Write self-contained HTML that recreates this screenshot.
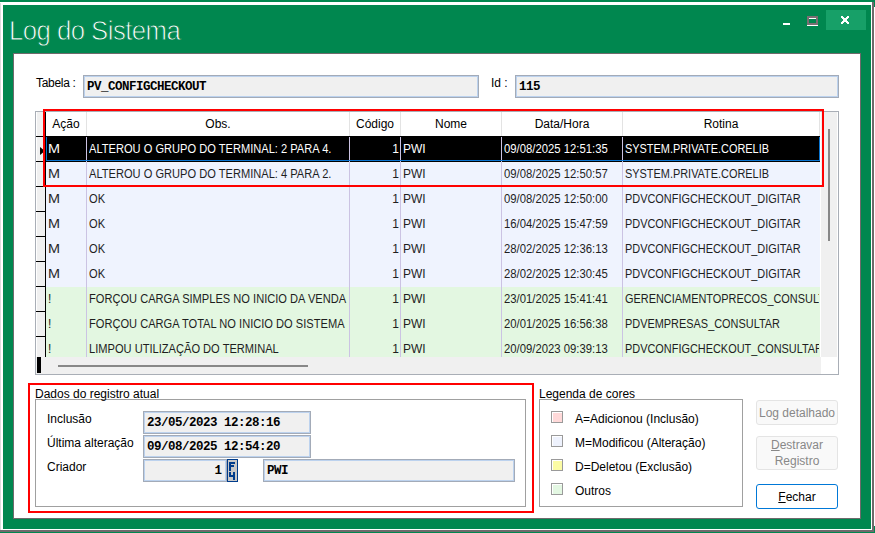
<!DOCTYPE html>
<html><head><meta charset="utf-8"><style>
html,body{margin:0;padding:0;width:875px;height:533px;overflow:hidden;position:relative}
</style></head><body>
<div style="position:absolute;left:0px;top:0px;width:875px;height:533px;background:#00874f"></div>
<div style="position:absolute;left:874px;top:7px;width:1px;height:519px;background:#ffffff"></div>
<div style="position:absolute;left:0px;top:2px;width:874px;height:530px;background:#6e6a6c"></div>
<div style="position:absolute;left:0px;top:2px;width:872px;height:528px;background:#ffffff"></div>
<div style="position:absolute;left:0px;top:3px;width:1px;height:527px;background:#dcdcdc"></div>
<div style="position:absolute;left:3px;top:5px;width:868px;height:524px;background:#00874f"></div>
<div style="position:absolute;left:8.5px;top:16px;font-family:'Liberation Sans', sans-serif;font-size:28px;color:#fff;-webkit-text-stroke:0.9px #00874f;white-space:pre;line-height:30px;letter-spacing:-0.6px;transform:scaleX(0.92);transform-origin:left">Log do Sistema</div>
<div style="position:absolute;left:783px;top:23px;width:7px;height:2px;background:#fff"></div>
<div style="position:absolute;left:807px;top:16px;width:11px;height:9px;border:2px solid #7a6e72;box-sizing:border-box"></div>
<div style="position:absolute;left:809px;top:18px;width:7px;height:1px;background:#fff"></div>
<div style="position:absolute;left:807px;top:25px;width:11px;height:1px;background:#fff"></div>
<div style="position:absolute;left:826px;top:10px;width:40px;height:20px;background:#17a068"></div>
<svg style="position:absolute;left:841px;top:16px" width="8" height="8" viewBox="0 0 8 8" fill="#fff" shape-rendering="crispEdges"><rect x="0" y="0" width="1" height="1"/><rect x="1" y="0" width="1" height="1"/><rect x="6" y="0" width="1" height="1"/><rect x="7" y="0" width="1" height="1"/><rect x="0" y="1" width="1" height="1"/><rect x="1" y="1" width="1" height="1"/><rect x="2" y="1" width="1" height="1"/><rect x="5" y="1" width="1" height="1"/><rect x="6" y="1" width="1" height="1"/><rect x="7" y="1" width="1" height="1"/><rect x="1" y="2" width="1" height="1"/><rect x="2" y="2" width="1" height="1"/><rect x="3" y="2" width="1" height="1"/><rect x="4" y="2" width="1" height="1"/><rect x="5" y="2" width="1" height="1"/><rect x="6" y="2" width="1" height="1"/><rect x="2" y="3" width="1" height="1"/><rect x="3" y="3" width="1" height="1"/><rect x="4" y="3" width="1" height="1"/><rect x="5" y="3" width="1" height="1"/><rect x="2" y="4" width="1" height="1"/><rect x="3" y="4" width="1" height="1"/><rect x="4" y="4" width="1" height="1"/><rect x="5" y="4" width="1" height="1"/><rect x="1" y="5" width="1" height="1"/><rect x="2" y="5" width="1" height="1"/><rect x="3" y="5" width="1" height="1"/><rect x="4" y="5" width="1" height="1"/><rect x="5" y="5" width="1" height="1"/><rect x="6" y="5" width="1" height="1"/><rect x="0" y="6" width="1" height="1"/><rect x="1" y="6" width="1" height="1"/><rect x="2" y="6" width="1" height="1"/><rect x="5" y="6" width="1" height="1"/><rect x="6" y="6" width="1" height="1"/><rect x="7" y="6" width="1" height="1"/><rect x="0" y="7" width="1" height="1"/><rect x="1" y="7" width="1" height="1"/><rect x="6" y="7" width="1" height="1"/><rect x="7" y="7" width="1" height="1"/></svg>
<div style="position:absolute;left:13px;top:53px;width:848px;height:466px;background:#fff;border:1px solid #6e6a6c;box-sizing:border-box"></div>
<div style="position:absolute;left:36px;top:76.84px;font-family:'Liberation Sans', sans-serif;font-size:12px;font-weight:400;color:#000;white-space:pre;line-height:12px;letter-spacing:-0.3px">Tabela :</div>
<div style="position:absolute;left:83px;top:75px;width:396px;height:23px;background:#f0f0f0;border:1px solid #a3abb8;box-shadow:inset 0 0 0 1px #bcd2ee;box-sizing:border-box"></div>
<div style="position:absolute;left:87px;top:80.92px;font-family:'Liberation Mono', monospace;font-size:12.5px;font-weight:700;color:#000;white-space:pre;line-height:12.5px;letter-spacing:-0.5px">PV_CONFIGCHECKOUT</div>
<div style="position:absolute;left:491px;top:76.84px;font-family:'Liberation Sans', sans-serif;font-size:12px;font-weight:400;color:#000;white-space:pre;line-height:12px;">Id :</div>
<div style="position:absolute;left:515px;top:75px;width:324px;height:23px;background:#f0f0f0;border:1px solid #a3abb8;box-shadow:inset 0 0 0 1px #bcd2ee;box-sizing:border-box"></div>
<div style="position:absolute;left:519px;top:80.92px;font-family:'Liberation Mono', monospace;font-size:12.5px;font-weight:700;color:#000;white-space:pre;line-height:12.5px;letter-spacing:-0.5px">115</div>
<div style="position:absolute;left:35px;top:111px;width:804px;height:264px;background:#fff;border:1px solid #a9aeb6;box-sizing:border-box"></div>
<div style="position:absolute;left:36px;top:112px;width:10px;height:245px;background:#000"></div>
<div style="position:absolute;left:36px;top:112px;width:9px;height:24px;background:#f0f0f0;border-left:1px solid #fff;box-sizing:border-box"></div>
<div style="position:absolute;left:36px;top:137px;width:9px;height:24px;background:#f0f0f0;border-left:1px solid #fff;box-sizing:border-box"></div>
<div style="position:absolute;left:36px;top:162px;width:9px;height:24px;background:#f0f0f0;border-left:1px solid #fff;box-sizing:border-box"></div>
<div style="position:absolute;left:36px;top:187px;width:9px;height:24px;background:#f0f0f0;border-left:1px solid #fff;box-sizing:border-box"></div>
<div style="position:absolute;left:36px;top:212px;width:9px;height:24px;background:#f0f0f0;border-left:1px solid #fff;box-sizing:border-box"></div>
<div style="position:absolute;left:36px;top:237px;width:9px;height:24px;background:#f0f0f0;border-left:1px solid #fff;box-sizing:border-box"></div>
<div style="position:absolute;left:36px;top:262px;width:9px;height:24px;background:#f0f0f0;border-left:1px solid #fff;box-sizing:border-box"></div>
<div style="position:absolute;left:36px;top:287px;width:9px;height:24px;background:#f0f0f0;border-left:1px solid #fff;box-sizing:border-box"></div>
<div style="position:absolute;left:36px;top:312px;width:9px;height:24px;background:#f0f0f0;border-left:1px solid #fff;box-sizing:border-box"></div>
<div style="position:absolute;left:36px;top:337px;width:9px;height:20px;background:#f0f0f0;border-left:1px solid #fff;box-sizing:border-box"></div>
<svg style="position:absolute;left:40px;top:147px" width="4" height="8" viewBox="0 0 4 8"><path d="M0 0 L4 3.2 L4 4.8 L0 8Z" fill="#000"/></svg>
<div style="position:absolute;left:46px;top:112px;width:40px;height:24px;font-family:'Liberation Sans', sans-serif;font-size:12px;line-height:24px;text-align:center;color:#000">Ação</div>
<div style="position:absolute;left:86px;top:112px;width:1px;height:24px;background:#e3e3e3"></div>
<div style="position:absolute;left:87px;top:112px;width:262px;height:24px;font-family:'Liberation Sans', sans-serif;font-size:12px;line-height:24px;text-align:center;color:#000">Obs.</div>
<div style="position:absolute;left:349px;top:112px;width:1px;height:24px;background:#e3e3e3"></div>
<div style="position:absolute;left:350px;top:112px;width:50px;height:24px;font-family:'Liberation Sans', sans-serif;font-size:12px;line-height:24px;text-align:center;color:#000">Código</div>
<div style="position:absolute;left:400px;top:112px;width:1px;height:24px;background:#e3e3e3"></div>
<div style="position:absolute;left:401px;top:112px;width:100px;height:24px;font-family:'Liberation Sans', sans-serif;font-size:12px;line-height:24px;text-align:center;color:#000">Nome</div>
<div style="position:absolute;left:501px;top:112px;width:1px;height:24px;background:#e3e3e3"></div>
<div style="position:absolute;left:502px;top:112px;width:120px;height:24px;font-family:'Liberation Sans', sans-serif;font-size:12px;line-height:24px;text-align:center;color:#000">Data/Hora</div>
<div style="position:absolute;left:622px;top:112px;width:1px;height:24px;background:#e3e3e3"></div>
<div style="position:absolute;left:623px;top:112px;width:196px;height:24px;font-family:'Liberation Sans', sans-serif;font-size:12px;line-height:24px;text-align:center;color:#000">Rotina</div>
<div style="position:absolute;left:819px;top:112px;width:1px;height:24px;background:#e3e3e3"></div>
<div style="position:absolute;left:46px;top:136px;width:774px;height:1px;background:#000"></div>
<div style="position:absolute;left:46px;top:137px;width:774px;height:220px;overflow:hidden">
<div style="position:absolute;left:0;top:0px;width:775px;height:25px;background:#000"></div>
<div style="position:absolute;left:0px;top:0px;width:40px;height:25px;overflow:hidden;font-family:'Liberation Sans', sans-serif;font-size:12px;line-height:25px;text-align:left;padding-left:2px;box-sizing:border-box;color:#fff;white-space:pre"><span style="display:inline-block;transform:scaleX(1.2);transform-origin:0 50%">M</span></div>
<div style="position:absolute;left:40px;top:0px;width:1px;height:25px;background:#cbc3e3"></div>
<div style="position:absolute;left:41px;top:0px;width:262px;height:25px;overflow:hidden;font-family:'Liberation Sans', sans-serif;font-size:12px;line-height:25px;text-align:left;padding-left:2px;box-sizing:border-box;color:#fff;white-space:pre"><span style="display:inline-block;transform:scaleX(0.925);transform-origin:0 50%">ALTEROU O GRUPO DO TERMINAL: 2 PARA 4.</span></div>
<div style="position:absolute;left:303px;top:0px;width:1px;height:25px;background:#cbc3e3"></div>
<div style="position:absolute;left:304px;top:0px;width:50px;height:25px;overflow:hidden;font-family:'Liberation Sans', sans-serif;font-size:12px;line-height:25px;text-align:right;padding-right:1px;box-sizing:border-box;color:#fff;white-space:pre">1</div>
<div style="position:absolute;left:354px;top:0px;width:1px;height:25px;background:#cbc3e3"></div>
<div style="position:absolute;left:355px;top:0px;width:100px;height:25px;overflow:hidden;font-family:'Liberation Sans', sans-serif;font-size:12px;line-height:25px;text-align:left;padding-left:2px;box-sizing:border-box;color:#fff;white-space:pre">PWI</div>
<div style="position:absolute;left:455px;top:0px;width:1px;height:25px;background:#cbc3e3"></div>
<div style="position:absolute;left:456px;top:0px;width:120px;height:25px;overflow:hidden;font-family:'Liberation Sans', sans-serif;font-size:12px;line-height:25px;text-align:left;padding-left:2px;box-sizing:border-box;color:#fff;white-space:pre"><span style="display:inline-block;transform:scaleX(0.943);transform-origin:0 50%">09/08/2025 12:51:35</span></div>
<div style="position:absolute;left:576px;top:0px;width:1px;height:25px;background:#cbc3e3"></div>
<div style="position:absolute;left:577px;top:0px;width:196px;height:25px;overflow:hidden;font-family:'Liberation Sans', sans-serif;font-size:12px;line-height:25px;text-align:left;padding-left:2px;box-sizing:border-box;color:#fff;white-space:pre"><span style="display:inline-block;transform:scaleX(0.91);transform-origin:0 50%">SYSTEM.PRIVATE.CORELIB</span></div>
<div style="position:absolute;left:0;top:25px;width:775px;height:25px;background:#eff3fe"></div>
<div style="position:absolute;left:0px;top:25px;width:40px;height:25px;overflow:hidden;font-family:'Liberation Sans', sans-serif;font-size:12px;line-height:25px;text-align:left;padding-left:2px;box-sizing:border-box;color:#1e1e1e;white-space:pre"><span style="display:inline-block;transform:scaleX(1.2);transform-origin:0 50%">M</span></div>
<div style="position:absolute;left:40px;top:25px;width:1px;height:25px;background:#cbc3e3"></div>
<div style="position:absolute;left:41px;top:25px;width:262px;height:25px;overflow:hidden;font-family:'Liberation Sans', sans-serif;font-size:12px;line-height:25px;text-align:left;padding-left:2px;box-sizing:border-box;color:#1e1e1e;white-space:pre"><span style="display:inline-block;transform:scaleX(0.925);transform-origin:0 50%">ALTEROU O GRUPO DO TERMINAL: 4 PARA 2.</span></div>
<div style="position:absolute;left:303px;top:25px;width:1px;height:25px;background:#cbc3e3"></div>
<div style="position:absolute;left:304px;top:25px;width:50px;height:25px;overflow:hidden;font-family:'Liberation Sans', sans-serif;font-size:12px;line-height:25px;text-align:right;padding-right:1px;box-sizing:border-box;color:#1e1e1e;white-space:pre">1</div>
<div style="position:absolute;left:354px;top:25px;width:1px;height:25px;background:#cbc3e3"></div>
<div style="position:absolute;left:355px;top:25px;width:100px;height:25px;overflow:hidden;font-family:'Liberation Sans', sans-serif;font-size:12px;line-height:25px;text-align:left;padding-left:2px;box-sizing:border-box;color:#1e1e1e;white-space:pre">PWI</div>
<div style="position:absolute;left:455px;top:25px;width:1px;height:25px;background:#cbc3e3"></div>
<div style="position:absolute;left:456px;top:25px;width:120px;height:25px;overflow:hidden;font-family:'Liberation Sans', sans-serif;font-size:12px;line-height:25px;text-align:left;padding-left:2px;box-sizing:border-box;color:#1e1e1e;white-space:pre"><span style="display:inline-block;transform:scaleX(0.943);transform-origin:0 50%">09/08/2025 12:50:57</span></div>
<div style="position:absolute;left:576px;top:25px;width:1px;height:25px;background:#cbc3e3"></div>
<div style="position:absolute;left:577px;top:25px;width:196px;height:25px;overflow:hidden;font-family:'Liberation Sans', sans-serif;font-size:12px;line-height:25px;text-align:left;padding-left:2px;box-sizing:border-box;color:#1e1e1e;white-space:pre"><span style="display:inline-block;transform:scaleX(0.91);transform-origin:0 50%">SYSTEM.PRIVATE.CORELIB</span></div>
<div style="position:absolute;left:0;top:50px;width:775px;height:25px;background:#eff3fe"></div>
<div style="position:absolute;left:0px;top:50px;width:40px;height:25px;overflow:hidden;font-family:'Liberation Sans', sans-serif;font-size:12px;line-height:25px;text-align:left;padding-left:2px;box-sizing:border-box;color:#1e1e1e;white-space:pre"><span style="display:inline-block;transform:scaleX(1.2);transform-origin:0 50%">M</span></div>
<div style="position:absolute;left:40px;top:50px;width:1px;height:25px;background:#cbc3e3"></div>
<div style="position:absolute;left:41px;top:50px;width:262px;height:25px;overflow:hidden;font-family:'Liberation Sans', sans-serif;font-size:12px;line-height:25px;text-align:left;padding-left:2px;box-sizing:border-box;color:#1e1e1e;white-space:pre"><span style="display:inline-block;transform:scaleX(0.925);transform-origin:0 50%">OK</span></div>
<div style="position:absolute;left:303px;top:50px;width:1px;height:25px;background:#cbc3e3"></div>
<div style="position:absolute;left:304px;top:50px;width:50px;height:25px;overflow:hidden;font-family:'Liberation Sans', sans-serif;font-size:12px;line-height:25px;text-align:right;padding-right:1px;box-sizing:border-box;color:#1e1e1e;white-space:pre">1</div>
<div style="position:absolute;left:354px;top:50px;width:1px;height:25px;background:#cbc3e3"></div>
<div style="position:absolute;left:355px;top:50px;width:100px;height:25px;overflow:hidden;font-family:'Liberation Sans', sans-serif;font-size:12px;line-height:25px;text-align:left;padding-left:2px;box-sizing:border-box;color:#1e1e1e;white-space:pre">PWI</div>
<div style="position:absolute;left:455px;top:50px;width:1px;height:25px;background:#cbc3e3"></div>
<div style="position:absolute;left:456px;top:50px;width:120px;height:25px;overflow:hidden;font-family:'Liberation Sans', sans-serif;font-size:12px;line-height:25px;text-align:left;padding-left:2px;box-sizing:border-box;color:#1e1e1e;white-space:pre"><span style="display:inline-block;transform:scaleX(0.943);transform-origin:0 50%">09/08/2025 12:50:00</span></div>
<div style="position:absolute;left:576px;top:50px;width:1px;height:25px;background:#cbc3e3"></div>
<div style="position:absolute;left:577px;top:50px;width:196px;height:25px;overflow:hidden;font-family:'Liberation Sans', sans-serif;font-size:12px;line-height:25px;text-align:left;padding-left:2px;box-sizing:border-box;color:#1e1e1e;white-space:pre"><span style="display:inline-block;transform:scaleX(0.91);transform-origin:0 50%">PDVCONFIGCHECKOUT_DIGITAR</span></div>
<div style="position:absolute;left:0;top:75px;width:775px;height:25px;background:#eff3fe"></div>
<div style="position:absolute;left:0px;top:75px;width:40px;height:25px;overflow:hidden;font-family:'Liberation Sans', sans-serif;font-size:12px;line-height:25px;text-align:left;padding-left:2px;box-sizing:border-box;color:#1e1e1e;white-space:pre"><span style="display:inline-block;transform:scaleX(1.2);transform-origin:0 50%">M</span></div>
<div style="position:absolute;left:40px;top:75px;width:1px;height:25px;background:#cbc3e3"></div>
<div style="position:absolute;left:41px;top:75px;width:262px;height:25px;overflow:hidden;font-family:'Liberation Sans', sans-serif;font-size:12px;line-height:25px;text-align:left;padding-left:2px;box-sizing:border-box;color:#1e1e1e;white-space:pre"><span style="display:inline-block;transform:scaleX(0.925);transform-origin:0 50%">OK</span></div>
<div style="position:absolute;left:303px;top:75px;width:1px;height:25px;background:#cbc3e3"></div>
<div style="position:absolute;left:304px;top:75px;width:50px;height:25px;overflow:hidden;font-family:'Liberation Sans', sans-serif;font-size:12px;line-height:25px;text-align:right;padding-right:1px;box-sizing:border-box;color:#1e1e1e;white-space:pre">1</div>
<div style="position:absolute;left:354px;top:75px;width:1px;height:25px;background:#cbc3e3"></div>
<div style="position:absolute;left:355px;top:75px;width:100px;height:25px;overflow:hidden;font-family:'Liberation Sans', sans-serif;font-size:12px;line-height:25px;text-align:left;padding-left:2px;box-sizing:border-box;color:#1e1e1e;white-space:pre">PWI</div>
<div style="position:absolute;left:455px;top:75px;width:1px;height:25px;background:#cbc3e3"></div>
<div style="position:absolute;left:456px;top:75px;width:120px;height:25px;overflow:hidden;font-family:'Liberation Sans', sans-serif;font-size:12px;line-height:25px;text-align:left;padding-left:2px;box-sizing:border-box;color:#1e1e1e;white-space:pre"><span style="display:inline-block;transform:scaleX(0.943);transform-origin:0 50%">16/04/2025 15:47:59</span></div>
<div style="position:absolute;left:576px;top:75px;width:1px;height:25px;background:#cbc3e3"></div>
<div style="position:absolute;left:577px;top:75px;width:196px;height:25px;overflow:hidden;font-family:'Liberation Sans', sans-serif;font-size:12px;line-height:25px;text-align:left;padding-left:2px;box-sizing:border-box;color:#1e1e1e;white-space:pre"><span style="display:inline-block;transform:scaleX(0.91);transform-origin:0 50%">PDVCONFIGCHECKOUT_DIGITAR</span></div>
<div style="position:absolute;left:0;top:100px;width:775px;height:25px;background:#eff3fe"></div>
<div style="position:absolute;left:0px;top:100px;width:40px;height:25px;overflow:hidden;font-family:'Liberation Sans', sans-serif;font-size:12px;line-height:25px;text-align:left;padding-left:2px;box-sizing:border-box;color:#1e1e1e;white-space:pre"><span style="display:inline-block;transform:scaleX(1.2);transform-origin:0 50%">M</span></div>
<div style="position:absolute;left:40px;top:100px;width:1px;height:25px;background:#cbc3e3"></div>
<div style="position:absolute;left:41px;top:100px;width:262px;height:25px;overflow:hidden;font-family:'Liberation Sans', sans-serif;font-size:12px;line-height:25px;text-align:left;padding-left:2px;box-sizing:border-box;color:#1e1e1e;white-space:pre"><span style="display:inline-block;transform:scaleX(0.925);transform-origin:0 50%">OK</span></div>
<div style="position:absolute;left:303px;top:100px;width:1px;height:25px;background:#cbc3e3"></div>
<div style="position:absolute;left:304px;top:100px;width:50px;height:25px;overflow:hidden;font-family:'Liberation Sans', sans-serif;font-size:12px;line-height:25px;text-align:right;padding-right:1px;box-sizing:border-box;color:#1e1e1e;white-space:pre">1</div>
<div style="position:absolute;left:354px;top:100px;width:1px;height:25px;background:#cbc3e3"></div>
<div style="position:absolute;left:355px;top:100px;width:100px;height:25px;overflow:hidden;font-family:'Liberation Sans', sans-serif;font-size:12px;line-height:25px;text-align:left;padding-left:2px;box-sizing:border-box;color:#1e1e1e;white-space:pre">PWI</div>
<div style="position:absolute;left:455px;top:100px;width:1px;height:25px;background:#cbc3e3"></div>
<div style="position:absolute;left:456px;top:100px;width:120px;height:25px;overflow:hidden;font-family:'Liberation Sans', sans-serif;font-size:12px;line-height:25px;text-align:left;padding-left:2px;box-sizing:border-box;color:#1e1e1e;white-space:pre"><span style="display:inline-block;transform:scaleX(0.943);transform-origin:0 50%">28/02/2025 12:36:13</span></div>
<div style="position:absolute;left:576px;top:100px;width:1px;height:25px;background:#cbc3e3"></div>
<div style="position:absolute;left:577px;top:100px;width:196px;height:25px;overflow:hidden;font-family:'Liberation Sans', sans-serif;font-size:12px;line-height:25px;text-align:left;padding-left:2px;box-sizing:border-box;color:#1e1e1e;white-space:pre"><span style="display:inline-block;transform:scaleX(0.91);transform-origin:0 50%">PDVCONFIGCHECKOUT_DIGITAR</span></div>
<div style="position:absolute;left:0;top:125px;width:775px;height:25px;background:#eff3fe"></div>
<div style="position:absolute;left:0px;top:125px;width:40px;height:25px;overflow:hidden;font-family:'Liberation Sans', sans-serif;font-size:12px;line-height:25px;text-align:left;padding-left:2px;box-sizing:border-box;color:#1e1e1e;white-space:pre"><span style="display:inline-block;transform:scaleX(1.2);transform-origin:0 50%">M</span></div>
<div style="position:absolute;left:40px;top:125px;width:1px;height:25px;background:#cbc3e3"></div>
<div style="position:absolute;left:41px;top:125px;width:262px;height:25px;overflow:hidden;font-family:'Liberation Sans', sans-serif;font-size:12px;line-height:25px;text-align:left;padding-left:2px;box-sizing:border-box;color:#1e1e1e;white-space:pre"><span style="display:inline-block;transform:scaleX(0.925);transform-origin:0 50%">OK</span></div>
<div style="position:absolute;left:303px;top:125px;width:1px;height:25px;background:#cbc3e3"></div>
<div style="position:absolute;left:304px;top:125px;width:50px;height:25px;overflow:hidden;font-family:'Liberation Sans', sans-serif;font-size:12px;line-height:25px;text-align:right;padding-right:1px;box-sizing:border-box;color:#1e1e1e;white-space:pre">1</div>
<div style="position:absolute;left:354px;top:125px;width:1px;height:25px;background:#cbc3e3"></div>
<div style="position:absolute;left:355px;top:125px;width:100px;height:25px;overflow:hidden;font-family:'Liberation Sans', sans-serif;font-size:12px;line-height:25px;text-align:left;padding-left:2px;box-sizing:border-box;color:#1e1e1e;white-space:pre">PWI</div>
<div style="position:absolute;left:455px;top:125px;width:1px;height:25px;background:#cbc3e3"></div>
<div style="position:absolute;left:456px;top:125px;width:120px;height:25px;overflow:hidden;font-family:'Liberation Sans', sans-serif;font-size:12px;line-height:25px;text-align:left;padding-left:2px;box-sizing:border-box;color:#1e1e1e;white-space:pre"><span style="display:inline-block;transform:scaleX(0.943);transform-origin:0 50%">28/02/2025 12:30:45</span></div>
<div style="position:absolute;left:576px;top:125px;width:1px;height:25px;background:#cbc3e3"></div>
<div style="position:absolute;left:577px;top:125px;width:196px;height:25px;overflow:hidden;font-family:'Liberation Sans', sans-serif;font-size:12px;line-height:25px;text-align:left;padding-left:2px;box-sizing:border-box;color:#1e1e1e;white-space:pre"><span style="display:inline-block;transform:scaleX(0.91);transform-origin:0 50%">PDVCONFIGCHECKOUT_DIGITAR</span></div>
<div style="position:absolute;left:0;top:150px;width:775px;height:25px;background:#e3f7e1"></div>
<div style="position:absolute;left:0px;top:150px;width:40px;height:25px;overflow:hidden;font-family:'Liberation Sans', sans-serif;font-size:12px;line-height:25px;text-align:left;padding-left:2px;box-sizing:border-box;color:#1e1e1e;white-space:pre">!</div>
<div style="position:absolute;left:40px;top:150px;width:1px;height:25px;background:#cbc3e3"></div>
<div style="position:absolute;left:41px;top:150px;width:262px;height:25px;overflow:hidden;font-family:'Liberation Sans', sans-serif;font-size:12px;line-height:25px;text-align:left;padding-left:2px;box-sizing:border-box;color:#1e1e1e;white-space:pre"><span style="display:inline-block;transform:scaleX(0.925);transform-origin:0 50%">FORÇOU CARGA SIMPLES NO INICIO DA VENDA</span></div>
<div style="position:absolute;left:303px;top:150px;width:1px;height:25px;background:#cbc3e3"></div>
<div style="position:absolute;left:304px;top:150px;width:50px;height:25px;overflow:hidden;font-family:'Liberation Sans', sans-serif;font-size:12px;line-height:25px;text-align:right;padding-right:1px;box-sizing:border-box;color:#1e1e1e;white-space:pre">1</div>
<div style="position:absolute;left:354px;top:150px;width:1px;height:25px;background:#cbc3e3"></div>
<div style="position:absolute;left:355px;top:150px;width:100px;height:25px;overflow:hidden;font-family:'Liberation Sans', sans-serif;font-size:12px;line-height:25px;text-align:left;padding-left:2px;box-sizing:border-box;color:#1e1e1e;white-space:pre">PWI</div>
<div style="position:absolute;left:455px;top:150px;width:1px;height:25px;background:#cbc3e3"></div>
<div style="position:absolute;left:456px;top:150px;width:120px;height:25px;overflow:hidden;font-family:'Liberation Sans', sans-serif;font-size:12px;line-height:25px;text-align:left;padding-left:2px;box-sizing:border-box;color:#1e1e1e;white-space:pre"><span style="display:inline-block;transform:scaleX(0.943);transform-origin:0 50%">23/01/2025 15:41:41</span></div>
<div style="position:absolute;left:576px;top:150px;width:1px;height:25px;background:#cbc3e3"></div>
<div style="position:absolute;left:577px;top:150px;width:196px;height:25px;overflow:hidden;font-family:'Liberation Sans', sans-serif;font-size:12px;line-height:25px;text-align:left;padding-left:2px;box-sizing:border-box;color:#1e1e1e;white-space:pre"><span style="display:inline-block;transform:scaleX(0.91);transform-origin:0 50%">GERENCIAMENTOPRECOS_CONSULTAR</span></div>
<div style="position:absolute;left:0;top:175px;width:775px;height:25px;background:#e3f7e1"></div>
<div style="position:absolute;left:0px;top:175px;width:40px;height:25px;overflow:hidden;font-family:'Liberation Sans', sans-serif;font-size:12px;line-height:25px;text-align:left;padding-left:2px;box-sizing:border-box;color:#1e1e1e;white-space:pre">!</div>
<div style="position:absolute;left:40px;top:175px;width:1px;height:25px;background:#cbc3e3"></div>
<div style="position:absolute;left:41px;top:175px;width:262px;height:25px;overflow:hidden;font-family:'Liberation Sans', sans-serif;font-size:12px;line-height:25px;text-align:left;padding-left:2px;box-sizing:border-box;color:#1e1e1e;white-space:pre"><span style="display:inline-block;transform:scaleX(0.925);transform-origin:0 50%">FORÇOU CARGA TOTAL NO INICIO DO SISTEMA</span></div>
<div style="position:absolute;left:303px;top:175px;width:1px;height:25px;background:#cbc3e3"></div>
<div style="position:absolute;left:304px;top:175px;width:50px;height:25px;overflow:hidden;font-family:'Liberation Sans', sans-serif;font-size:12px;line-height:25px;text-align:right;padding-right:1px;box-sizing:border-box;color:#1e1e1e;white-space:pre">1</div>
<div style="position:absolute;left:354px;top:175px;width:1px;height:25px;background:#cbc3e3"></div>
<div style="position:absolute;left:355px;top:175px;width:100px;height:25px;overflow:hidden;font-family:'Liberation Sans', sans-serif;font-size:12px;line-height:25px;text-align:left;padding-left:2px;box-sizing:border-box;color:#1e1e1e;white-space:pre">PWI</div>
<div style="position:absolute;left:455px;top:175px;width:1px;height:25px;background:#cbc3e3"></div>
<div style="position:absolute;left:456px;top:175px;width:120px;height:25px;overflow:hidden;font-family:'Liberation Sans', sans-serif;font-size:12px;line-height:25px;text-align:left;padding-left:2px;box-sizing:border-box;color:#1e1e1e;white-space:pre"><span style="display:inline-block;transform:scaleX(0.943);transform-origin:0 50%">20/01/2025 16:56:38</span></div>
<div style="position:absolute;left:576px;top:175px;width:1px;height:25px;background:#cbc3e3"></div>
<div style="position:absolute;left:577px;top:175px;width:196px;height:25px;overflow:hidden;font-family:'Liberation Sans', sans-serif;font-size:12px;line-height:25px;text-align:left;padding-left:2px;box-sizing:border-box;color:#1e1e1e;white-space:pre"><span style="display:inline-block;transform:scaleX(0.91);transform-origin:0 50%">PDVEMPRESAS_CONSULTAR</span></div>
<div style="position:absolute;left:0;top:200px;width:775px;height:25px;background:#e3f7e1"></div>
<div style="position:absolute;left:0px;top:200px;width:40px;height:25px;overflow:hidden;font-family:'Liberation Sans', sans-serif;font-size:12px;line-height:25px;text-align:left;padding-left:2px;box-sizing:border-box;color:#1e1e1e;white-space:pre">!</div>
<div style="position:absolute;left:40px;top:200px;width:1px;height:25px;background:#cbc3e3"></div>
<div style="position:absolute;left:41px;top:200px;width:262px;height:25px;overflow:hidden;font-family:'Liberation Sans', sans-serif;font-size:12px;line-height:25px;text-align:left;padding-left:2px;box-sizing:border-box;color:#1e1e1e;white-space:pre"><span style="display:inline-block;transform:scaleX(0.925);transform-origin:0 50%">LIMPOU UTILIZAÇÃO DO TERMINAL</span></div>
<div style="position:absolute;left:303px;top:200px;width:1px;height:25px;background:#cbc3e3"></div>
<div style="position:absolute;left:304px;top:200px;width:50px;height:25px;overflow:hidden;font-family:'Liberation Sans', sans-serif;font-size:12px;line-height:25px;text-align:right;padding-right:1px;box-sizing:border-box;color:#1e1e1e;white-space:pre">1</div>
<div style="position:absolute;left:354px;top:200px;width:1px;height:25px;background:#cbc3e3"></div>
<div style="position:absolute;left:355px;top:200px;width:100px;height:25px;overflow:hidden;font-family:'Liberation Sans', sans-serif;font-size:12px;line-height:25px;text-align:left;padding-left:2px;box-sizing:border-box;color:#1e1e1e;white-space:pre">PWI</div>
<div style="position:absolute;left:455px;top:200px;width:1px;height:25px;background:#cbc3e3"></div>
<div style="position:absolute;left:456px;top:200px;width:120px;height:25px;overflow:hidden;font-family:'Liberation Sans', sans-serif;font-size:12px;line-height:25px;text-align:left;padding-left:2px;box-sizing:border-box;color:#1e1e1e;white-space:pre"><span style="display:inline-block;transform:scaleX(0.943);transform-origin:0 50%">20/09/2023 09:39:13</span></div>
<div style="position:absolute;left:576px;top:200px;width:1px;height:25px;background:#cbc3e3"></div>
<div style="position:absolute;left:577px;top:200px;width:196px;height:25px;overflow:hidden;font-family:'Liberation Sans', sans-serif;font-size:12px;line-height:25px;text-align:left;padding-left:2px;box-sizing:border-box;color:#1e1e1e;white-space:pre"><span style="display:inline-block;transform:scaleX(0.91);transform-origin:0 50%">PDVCONFIGCHECKOUT_CONSULTAR</span></div>
</div>
<div style="position:absolute;left:46px;top:137px;width:1px;height:24px;background:#0a74d0"></div>
<div style="position:absolute;left:46px;top:160px;width:774px;height:1px;background:#0a74d0"></div>
<div style="position:absolute;left:819px;top:137px;width:1px;height:24px;background:#0a74d0"></div>
<div style="position:absolute;left:821px;top:112px;width:16px;height:245px;background:#f0f0f0"></div>
<div style="position:absolute;left:828px;top:129px;width:2px;height:112px;background:#888"></div>
<div style="position:absolute;left:36px;top:357px;width:785px;height:17px;background:#f0f0f0"></div>
<div style="position:absolute;left:37px;top:357px;width:4px;height:16px;background:#000"></div>
<div style="position:absolute;left:58px;top:365px;width:250px;height:2px;background:#888"></div>
<div style="position:absolute;left:43px;top:109px;width:781px;height:78px;border:2px solid #ff0000;box-sizing:border-box"></div>
<div style="position:absolute;left:35px;top:399px;width:491px;height:108px;border:1px solid #a0a0a0;box-sizing:border-box"></div>
<div style="position:absolute;left:35px;top:388px;padding-right:1px;font-family:'Liberation Sans', sans-serif;font-size:12px;line-height:12px;color:#000;white-space:pre">Dados do registro atual</div>
<div style="position:absolute;left:47px;top:412.84px;font-family:'Liberation Sans', sans-serif;font-size:12px;font-weight:400;color:#000;white-space:pre;line-height:12px;">Inclusão</div>
<div style="position:absolute;left:47px;top:436.84px;font-family:'Liberation Sans', sans-serif;font-size:12px;font-weight:400;color:#000;white-space:pre;line-height:12px;">Última alteração</div>
<div style="position:absolute;left:47px;top:460.84px;font-family:'Liberation Sans', sans-serif;font-size:12px;font-weight:400;color:#000;white-space:pre;line-height:12px;">Criador</div>
<div style="position:absolute;left:143px;top:411px;width:168px;height:23px;background:#f0f0f0;border:1px solid #a3abb8;box-shadow:inset 0 0 0 1px #bcd2ee;box-sizing:border-box"></div>
<div style="position:absolute;left:147px;top:416.92px;font-family:'Liberation Mono', monospace;font-size:12.5px;font-weight:700;color:#000;white-space:pre;line-height:12.5px;letter-spacing:-0.5px">23/05/2023 12:28:16</div>
<div style="position:absolute;left:143px;top:435px;width:168px;height:23px;background:#f0f0f0;border:1px solid #a3abb8;box-shadow:inset 0 0 0 1px #bcd2ee;box-sizing:border-box"></div>
<div style="position:absolute;left:147px;top:440.92px;font-family:'Liberation Mono', monospace;font-size:12.5px;font-weight:700;color:#000;white-space:pre;line-height:12.5px;letter-spacing:-0.5px">09/08/2025 12:54:20</div>
<div style="position:absolute;left:143px;top:459px;width:84px;height:23px;background:#f0f0f0;border:1px solid #a3abb8;box-shadow:inset 0 0 0 1px #bcd2ee;box-sizing:border-box"></div>
<div style="position:absolute;left:143px;top:459px;width:79px;height:23px;font-family:'Liberation Mono', monospace;font-size:12.5px;font-weight:700;line-height:24px;text-align:right;color:#000">1</div>
<div style="position:absolute;left:227px;top:459px;width:11px;height:23px;background:#c8c8c8;border:1px solid #003c8c;box-sizing:border-box"></div>
<svg style="position:absolute;left:229px;top:462px" width="6" height="9" viewBox="0 0 6 9" fill="#003c8c" shape-rendering="crispEdges"><rect x="0" y="0" width="1" height="1"/><rect x="1" y="0" width="1" height="1"/><rect x="2" y="0" width="1" height="1"/><rect x="3" y="0" width="1" height="1"/><rect x="4" y="0" width="1" height="1"/><rect x="5" y="0" width="1" height="1"/><rect x="0" y="1" width="1" height="1"/><rect x="1" y="1" width="1" height="1"/><rect x="2" y="1" width="1" height="1"/><rect x="3" y="1" width="1" height="1"/><rect x="4" y="1" width="1" height="1"/><rect x="5" y="1" width="1" height="1"/><rect x="0" y="2" width="1" height="1"/><rect x="1" y="2" width="1" height="1"/><rect x="0" y="3" width="1" height="1"/><rect x="1" y="3" width="1" height="1"/><rect x="2" y="3" width="1" height="1"/><rect x="3" y="3" width="1" height="1"/><rect x="4" y="3" width="1" height="1"/><rect x="0" y="4" width="1" height="1"/><rect x="1" y="4" width="1" height="1"/><rect x="2" y="4" width="1" height="1"/><rect x="3" y="4" width="1" height="1"/><rect x="4" y="4" width="1" height="1"/><rect x="0" y="5" width="1" height="1"/><rect x="1" y="5" width="1" height="1"/><rect x="0" y="6" width="1" height="1"/><rect x="1" y="6" width="1" height="1"/><rect x="0" y="7" width="1" height="1"/><rect x="1" y="7" width="1" height="1"/><rect x="0" y="8" width="1" height="1"/><rect x="1" y="8" width="1" height="1"/></svg>
<svg style="position:absolute;left:229px;top:472px" width="6" height="8" viewBox="0 0 6 8" fill="#003c8c" shape-rendering="crispEdges"><rect x="0" y="0" width="1" height="1"/><rect x="1" y="0" width="1" height="1"/><rect x="4" y="0" width="1" height="1"/><rect x="5" y="0" width="1" height="1"/><rect x="0" y="1" width="1" height="1"/><rect x="1" y="1" width="1" height="1"/><rect x="4" y="1" width="1" height="1"/><rect x="5" y="1" width="1" height="1"/><rect x="0" y="2" width="1" height="1"/><rect x="1" y="2" width="1" height="1"/><rect x="4" y="2" width="1" height="1"/><rect x="5" y="2" width="1" height="1"/><rect x="0" y="3" width="1" height="1"/><rect x="1" y="3" width="1" height="1"/><rect x="2" y="3" width="1" height="1"/><rect x="3" y="3" width="1" height="1"/><rect x="4" y="3" width="1" height="1"/><rect x="5" y="3" width="1" height="1"/><rect x="0" y="4" width="1" height="1"/><rect x="1" y="4" width="1" height="1"/><rect x="2" y="4" width="1" height="1"/><rect x="3" y="4" width="1" height="1"/><rect x="4" y="4" width="1" height="1"/><rect x="5" y="4" width="1" height="1"/><rect x="4" y="5" width="1" height="1"/><rect x="5" y="5" width="1" height="1"/><rect x="4" y="6" width="1" height="1"/><rect x="5" y="6" width="1" height="1"/><rect x="4" y="7" width="1" height="1"/><rect x="5" y="7" width="1" height="1"/></svg>
<div style="position:absolute;left:263px;top:459px;width:252px;height:23px;background:#f0f0f0;border:1px solid #a3abb8;box-shadow:inset 0 0 0 1px #bcd2ee;box-sizing:border-box"></div>
<div style="position:absolute;left:267px;top:464.92px;font-family:'Liberation Mono', monospace;font-size:12.5px;font-weight:700;color:#000;white-space:pre;line-height:12.5px;letter-spacing:-0.5px">PWI</div>
<div style="position:absolute;left:28px;top:383px;width:506px;height:130px;border:2px solid #ff0000;box-sizing:border-box"></div>
<div style="position:absolute;left:539px;top:399px;width:204px;height:108px;border:1px solid #a0a0a0;box-sizing:border-box"></div>
<div style="position:absolute;left:539px;top:388px;padding-right:1px;font-family:'Liberation Sans', sans-serif;font-size:12px;line-height:12px;color:#000;white-space:pre">Legenda de cores</div>
<div style="position:absolute;left:551px;top:411px;width:12px;height:12px;background:#ffd9d9;border:1px solid #9a9a9a;box-shadow:inset 1px 1px 0 #fff;box-sizing:border-box"></div>
<div style="position:absolute;left:575px;top:412.84px;font-family:'Liberation Sans', sans-serif;font-size:12px;font-weight:400;color:#000;white-space:pre;line-height:12px;">A=Adicionou (Inclusão)</div>
<div style="position:absolute;left:551px;top:435px;width:12px;height:12px;background:#eef2fd;border:1px solid #9a9a9a;box-shadow:inset 1px 1px 0 #fff;box-sizing:border-box"></div>
<div style="position:absolute;left:575px;top:436.84px;font-family:'Liberation Sans', sans-serif;font-size:12px;font-weight:400;color:#000;white-space:pre;line-height:12px;">M=Modificou (Alteração)</div>
<div style="position:absolute;left:551px;top:459px;width:12px;height:12px;background:#fcfca4;border:1px solid #9a9a9a;box-shadow:inset 1px 1px 0 #fff;box-sizing:border-box"></div>
<div style="position:absolute;left:575px;top:460.84px;font-family:'Liberation Sans', sans-serif;font-size:12px;font-weight:400;color:#000;white-space:pre;line-height:12px;">D=Deletou (Exclusão)</div>
<div style="position:absolute;left:551px;top:483px;width:12px;height:12px;background:#e3f7e2;border:1px solid #9a9a9a;box-shadow:inset 1px 1px 0 #fff;box-sizing:border-box"></div>
<div style="position:absolute;left:575px;top:484.84px;font-family:'Liberation Sans', sans-serif;font-size:12px;font-weight:400;color:#000;white-space:pre;line-height:12px;">Outros</div>
<div style="position:absolute;left:756px;top:400px;width:82px;height:25px;box-sizing:border-box;border-radius:3px;background:#f9f9f9;border:1px solid #e4e4e4;color:#888;font-family:'Liberation Sans', sans-serif;font-size:12px;display:flex;align-items:center;justify-content:center;text-align:center;line-height:16px"><span>Log detalhado</span></div>
<div style="position:absolute;left:756px;top:436px;width:82px;height:34px;box-sizing:border-box;border-radius:3px;background:#f9f9f9;border:1px solid #e4e4e4;color:#888;font-family:'Liberation Sans', sans-serif;font-size:12px;display:flex;align-items:center;justify-content:center;text-align:center;line-height:16px"><span><span style='text-decoration:underline'>D</span>estravar<br>Registro</span></div>
<div style="position:absolute;left:756px;top:484px;width:82px;height:25px;box-sizing:border-box;border-radius:3px;background:#fff;border:1px solid #0078d7;color:#000;font-family:'Liberation Sans', sans-serif;font-size:12px;display:flex;align-items:center;justify-content:center;text-align:center;line-height:16px"><span><span style='text-decoration:underline'>F</span>echar</span></div>
</body></html>
